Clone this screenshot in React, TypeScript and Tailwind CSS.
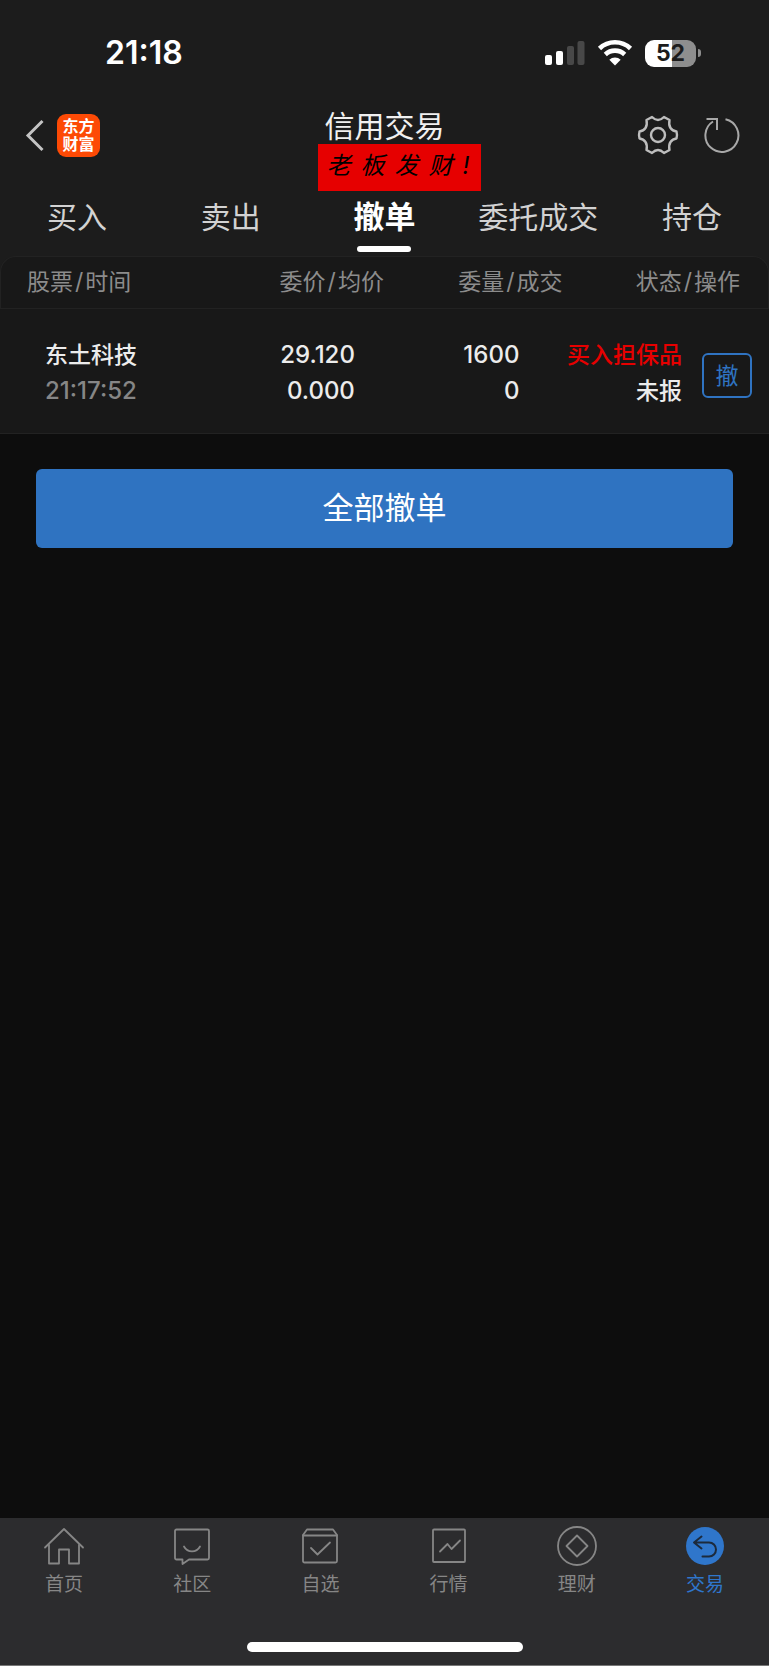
import React, { useState } from "react";

interface Order {
  name: string;
  time: string;
  price: string;
  avgPrice: string;
  amount: string;
  filled: string;
  side: string;
  status: string;
}

const tabs: string[] = ["买入", "卖出", "撤单", "委托成交", "持仓"];

const columns: [string, string, string][] = [
  ["股票", "时间", "w-[26%] rounded-tl-2xl border-l pl-[26px] text-left"],
  ["委价", "均价", "w-[26%] pr-4 text-right"],
  ["委量", "成交", "w-[24%] pr-[22px] text-right"],
  ["状态", "操作", "w-[24%] rounded-tr-2xl border-r pr-7 text-right"],
];

const initialOrders: Order[] = [
  {
    name: "东土科技",
    time: "21:17:52",
    price: "29.120",
    avgPrice: "0.000",
    amount: "1600",
    filled: "0",
    side: "买入担保品",
    status: "未报",
  },
];

const navItems: { label: string; icon: React.ReactNode }[] = [
  {
    label: "首页",
    icon: (
      <>
        <path d="M1 20.5 20 2l19 18.5" />
        <path d="M5 18v18.5h10v-14h10v14h10V18" />
      </>
    ),
  },
  {
    label: "社区",
    icon: (
      <>
        <path d="M4.5 2.5h31A1.5 1.5 0 0 1 37 4v27a1.5 1.5 0 0 1-1.5 1.5H17L10.500 37v-4.5h-6A1.5 1.5 0 0 1 3 31V4a1.5 1.5 0 0 1 1.5-1.5z" />
        <path d="M12 19.5c3.5 6.5 12.500 6.5 16 0" />
      </>
    ),
  },
  {
    label: "自选",
    icon: (
      <>
        <path d="M7 2.5h26L37 8v26a1.5 1.5 0 0 1-1.5 1.5h-31A1.5 1.5 0 0 1 3 34V8z" />
        <path d="M3 8.5h34M11 21l6.5 6.5L30 15.5" />
      </>
    ),
  },
  {
    label: "行情",
    icon: (
      <>
        <rect x="4" y="2.5" width="32" height="32.5" rx="1" />
        <path d="m11 24.5 7.5-7.5 4 5 8.500-8.500" />
      </>
    ),
  },
  {
    label: "理财",
    icon: (
      <>
        <circle cx="20" cy="19" r="19" />
        <path d="M20 8.5 30.5 19 20 29.5 9.5 19z" />
      </>
    ),
  },
  {
    label: "交易",
    icon: (
      <>
        <circle cx="20" cy="19" r="19" fill="#2f76cb" stroke="none" />
        <path
          d="M16.5 9.5 9 15.5l7.5 6M9 15.5h15a7 7 0 0 1 0 14h-6.5"
          stroke="#1c2a3c"
          strokeWidth="2"
        />
      </>
    ),
  },
];

const StatusBar: React.FC = () => (
  <div className="flex h-[106px] items-center justify-between pr-[68px] pl-[105px]">
    <span className="text-[32px] font-semibold text-white">21:18</span>
    <div className="flex items-center">
      <svg width="40" height="26" viewBox="0 0 40 26" aria-hidden="true">
        <rect x="0" y="15" width="7" height="10" rx="2" fill="#fff" />
        <rect x="11" y="11" width="7" height="14" rx="2" fill="#fff" />
        <rect x="22" y="6" width="7" height="19" rx="2" fill="#484848" />
        <rect x="32.5" y="1" width="7" height="24" rx="2" fill="#484848" />
      </svg>
      <svg
        className="ml-3"
        width="36"
        height="26"
        viewBox="0 0 36 26"
        aria-hidden="true"
      >
        <path
          d="M2.5 8.5a22.5 22.5 0 0 1 31 0M8.3 14.5a14.2 14.2 0 0 1 19.4 0"
          fill="none"
          stroke="#fff"
          strokeWidth="4.6"
        />
        <path d="m18 25.5-5.7-5.8a8.2 8.2 0 0 1 11.4 0z" fill="#fff" />
      </svg>
      <div className="ml-3 flex h-[27px] w-[51px] items-center justify-center rounded-[9px] bg-linear-to-r from-white from-52% to-[#8e8e8e] to-52% text-[23px] font-bold text-[#1c1c1c]">
        52
      </div>
      <div className="ml-0.5 h-2 w-[3px] rounded-r-full bg-[#8e8e8e]"></div>
    </div>
  </div>
);

const Header: React.FC = () => (
  <div className="relative flex h-[58px] items-center justify-between pr-7 pl-[25px]">
    <div className="flex items-center gap-3">
      <button aria-label="返回">
        <svg width="20" height="34" viewBox="0 0 20 34" fill="none">
          <path d="M17.5 3 3 17.5 17.5 32" stroke="#c4c4c4" strokeWidth="3" />
        </svg>
      </button>
      <div className="flex size-[43px] flex-col items-center justify-center rounded-[9px] bg-[#fd4a05] text-base leading-[18px] font-bold text-white">
        <span>东方</span>
        <span>财富</span>
      </div>
    </div>

    <div className="absolute top-0 left-1/2 -translate-x-1/2">
      <h1 className="text-[30px] leading-10 text-[#f0f0f0]">信用交易</h1>
      <div className="absolute top-[38px] -left-[7px] h-[47px] w-[163px] bg-[#e60000] pl-1 text-2xl leading-[44px] whitespace-nowrap text-black italic">
        {"老板发财!".split("").map((char) => (
          <span key={char} className="px-[5px]">
            {char}
          </span>
        ))}
      </div>
    </div>

    <div className="flex items-center gap-6">
      <button aria-label="设置">
        <svg width="42" height="42" viewBox="7 6 42 42" fill="none">
          <path
            d="M22 9Q25 12 28 12Q31 12 34 9L39.5 12Q38.5 17 40.5 20Q42.5 23 46.5 23.5Q47.5 27 46.5 30.5Q42.5 31 40.5 34Q38.5 37 39.5 42L34 45Q31 42 28 42Q25 42 22 45L16.5 42Q17.5 37 15.5 34Q13.5 31 9.5 30.5Q8.5 27 9.5 23.5Q13.5 23 15.5 20Q17.5 17 16.5 12Z"
            stroke="#bdbdbd"
            strokeWidth="2.4"
            strokeLinejoin="round"
          />
          <circle cx="28" cy="27" r="7" stroke="#bdbdbd" strokeWidth="2.4" />
        </svg>
      </button>
      <button aria-label="刷新">
        <svg
          width="38"
          height="38"
          viewBox="0 0 38 38"
          fill="none"
          stroke="#a8a8a8"
          strokeWidth="2"
        >
          <path d="M22.5 3.3A16.5 16.5 0 1 1 10 5.500" />
          <path d="M3.500 3h10.500v11" />
        </svg>
      </button>
    </div>
  </div>
);

const App: React.FC = () => {
  const [activeTab, setActiveTab] = useState("撤单");
  const [activeNav, setActiveNav] = useState("交易");
  const [orders, setOrders] = useState<Order[]>(initialOrders);

  const cancelOrder = (time: string) => {
    setOrders(orders.filter((order) => order.time !== time));
  };

  return (
    <div className="flex min-h-screen flex-col bg-[#0d0d0d] font-[Inter,'Noto_Sans_CJK_SC',sans-serif]">
      <header className="bg-[#1c1c1c]">
        <StatusBar />
        <Header />
        <div className="grid grid-cols-5 pt-[25px] pb-1">
          {tabs.map((tab) => (
            <button
              key={tab}
              onClick={() => setActiveTab(tab)}
              className={`flex flex-col items-center gap-px leading-[56px] ${
                tab === activeTab
                  ? "text-[31px] font-bold text-white"
                  : "text-[30px] text-[#d2d2d2]"
              }`}
            >
              {tab}
              {tab === activeTab && (
                <span className="h-1.5 w-[54px] rounded-full bg-white"></span>
              )}
            </button>
          ))}
        </div>
      </header>

      <main className="flex-1">
        <div className="bg-[#1c1c1c]">
          <table className="w-full table-fixed border-separate border-spacing-0">
            <thead>
              <tr>
                {columns.map(([first, second, style]) => (
                  <th
                    key={first}
                    className={`h-[53px] border-y border-[#222222] bg-[#181818] p-0 text-[23px] font-normal text-[#8c8c8c] ${style}`}
                  >
                    {first}
                    <span className="px-0.5">/</span>
                    {second}
                  </th>
                ))}
              </tr>
            </thead>
            <tbody className="bg-[#181818] text-2xl leading-9 font-medium text-[#ececec]">
              {orders.map((order) => (
                <tr key={order.time}>
                  <td className="h-[125px] border-b border-[#222222] p-0 pt-[3px] pl-[45px]">
                    <div className="text-[23px] leading-9">{order.name}</div>
                    <div className="text-[#868686]">{order.time}</div>
                  </td>
                  <td className="border-b border-[#222222] p-0 pt-[3px] pr-[45px] text-right">
                    <div>{order.price}</div>
                    <div>{order.avgPrice}</div>
                  </td>
                  <td className="border-b border-[#222222] p-0 pt-[3px] pr-[65px] text-right">
                    <div>{order.amount}</div>
                    <div>{order.filled}</div>
                  </td>
                  <td className="border-b border-[#222222] p-0 pt-[3px] pr-[17px] text-[23px]">
                    <div className="flex items-center justify-end gap-5">
                      <div className="text-right leading-9 whitespace-nowrap">
                        <div className="text-[#e60000]">{order.side}</div>
                        <div>{order.status}</div>
                      </div>
                      <button
                        onClick={() => cancelOrder(order.time)}
                        className="mt-1.5 h-[45px] w-[50px] shrink-0 rounded-md border-2 border-[#2f73c1] leading-9 font-normal text-[#2f73c1]"
                      >
                        撤
                      </button>
                    </div>
                  </td>
                </tr>
              ))}
            </tbody>
          </table>
        </div>

        <div className="px-9 pt-[35px]">
          <button
            onClick={() => setOrders([])}
            className="h-[79px] w-full rounded-md bg-[#2f73c1] text-[31px] text-white"
          >
            全部撤单
          </button>
        </div>
      </main>

      <footer className="border-b border-[#777777] bg-[#2c2c2e] pb-[13px]">
        <nav className="grid grid-cols-6 pt-2">
          {navItems.map(({ label, icon }) => (
            <button
              key={label}
              onClick={() => setActiveNav(label)}
              className={`flex flex-col items-center text-[19px] leading-[34px] ${
                label === activeNav ? "text-[#2f76cb]" : "text-[#868686]"
              }`}
            >
              <svg
                className="overflow-visible"
                width="40"
                height="42"
                viewBox="0 -1 40 42"
                fill="none"
                stroke="currentColor"
                strokeWidth="1.8"
                strokeLinejoin="round"
                strokeLinecap="round"
              >
                {icon}
              </svg>
              {label}
            </button>
          ))}
        </nav>
        <div className="mx-auto mt-10 h-2.5 w-[276px] rounded-full bg-white"></div>
      </footer>
    </div>
  );
};

export default App;
